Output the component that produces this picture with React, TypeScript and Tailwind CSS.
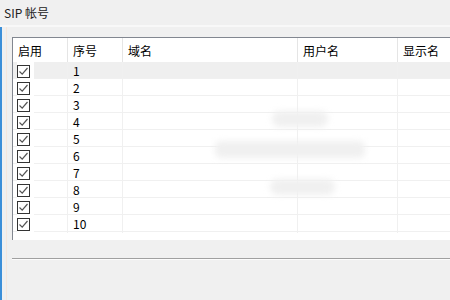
import React from 'react'

const cols = 'grid grid-cols-[55px_55px_175px_100px_1fr]'
const font = { fontFamily: '"Noto Sans CJK SC", "Liberation Sans", sans-serif' }

function Check() {
  return (
    <div className="w-[13px] h-[13px] border border-[#333] bg-white flex items-center justify-center">
      <svg width="11" height="11" viewBox="0 0 11 11">
        <path d="M1.5 5.5 L4.2 8.2 L9.5 2" fill="none" stroke="#555" strokeWidth="1.2" />
      </svg>
    </div>
  )
}

export default function App() {
  const rows = Array.from({ length: 10 }, (_, i) => i + 1)
  return (
    <div className="w-[450px] h-[300px] bg-[#f0f0f0] overflow-hidden relative text-[12px] text-black" style={font}>
      <div className="h-[25px] flex items-center pl-[4px] text-[12px] text-[#222]">SIP 帐号</div>
      <div className="h-[2px] bg-[#f8f8f8]" />
      <div className="flex h-[273px]">
        <div className="w-[2px] bg-[#3c8fd8]" />
        <div className="w-[4px]" />
        <div className="w-px bg-[#f6e7dc]" />
        <div className="w-[5px]" />
        <div className="flex-1 flex flex-col pt-[10px]">
          <div className="bg-white border-l border-t border-[#828790] h-[203px] flex flex-col">
            <div className={`${cols} h-[24px]`}>
              {['启用', '序号', '域名', '用户名', '显示名'].map((h, i) => (
                <div key={h} className={`flex items-center pl-[5px] pt-px ${i < 4 ? 'border-r border-[#e5e5e5]' : ''}`}>
                  {h}
                </div>
              ))}
            </div>
            {rows.map((n) => (
              <div key={n} className={`${cols} h-[17px] border-b border-[#f0f0f0] ${n === 1 ? 'bg-[#efefef]' : ''}`}>
                <div className="flex items-center pl-[4px] border-r border-[#f0f0f0]">
                  <div className="bg-white pr-[4px] h-full flex items-center"><Check /></div>
                </div>
                <div className="flex items-center pl-[5px] border-r border-[#f0f0f0]">{n}</div>
                <div className="border-r border-[#f0f0f0]" />
                <div className="border-r border-[#f0f0f0]" />
                <div />
              </div>
            ))}
          </div>
          <div className="h-[18px]" />
          <div className="h-px bg-[#a0a0a0]" />
          <div className="h-px bg-[#fcfcfc]" />
        </div>
      </div>
      <div className="absolute left-[272px] top-[111px] w-[56px] h-[16px] rounded-full bg-[#f0f0f0] blur-[3px]" />
      <div className="absolute left-[215px] top-[141px] w-[150px] h-[17px] rounded-md bg-[#f0f0f0] blur-[3px]" />
      <div className="absolute left-[270px] top-[179px] w-[65px] h-[16px] rounded-full bg-[#f0f0f0] blur-[3px]" />
    </div>
  )
}
